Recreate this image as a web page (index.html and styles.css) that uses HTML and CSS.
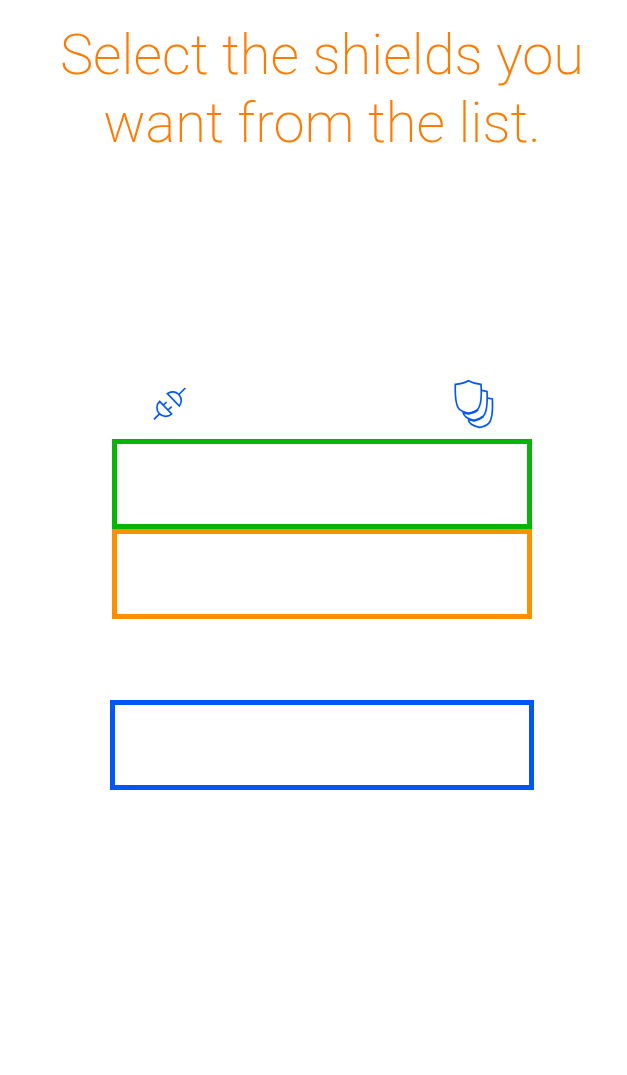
FILE: index.html
```html
<!DOCTYPE html>
<html lang="en">
<head>
<meta charset="utf-8">
<meta name="viewport" content="width=device-width, initial-scale=1">
<title>Shields</title>
<link rel="stylesheet" href="styles.css">
</head>
<body>
<main class="page">
  <h1 class="title">Select the shields you want from the list.</h1>
  <section class="picker">
    <div class="icons">
      <svg class="icon icon-plug" viewBox="0 0 150 138" aria-hidden="true">
        <path d="M121 24 103 42M67 41A26 26 0 0 1 103 78ZM44 64 80 102A26 26 0 0 1 44 64ZM44 101 27 118M54 76 65 66M69 90 80 80"/>
      </svg>
      <svg class="icon icon-shields" viewBox="0 0 156 186" aria-hidden="true">
        <path d="M61 26Q46 35 22 37Q20 100 35 113Q44 120 61 124Q80 120 89 112Q103 96 99 37Q78 35 61 26Z"/>
        <path d="M101 55 117 58Q120 118 106 132Q96 141 78 145Q48 138 45 121"/>
        <path d="M118 78 133 81Q136 140 122 154Q113 163 95 166Q62 159 61 142"/>
        <path class="shade" d="M45 120Q52 125 61 125Q80 122 90 113M61 141Q69 146 78 146Q96 143 107 133"/>
      </svg>
    </div>
    <ul class="list">
      <li class="item item-green"></li>
      <li class="item item-orange"></li>
    </ul>
    <button class="confirm" type="button" aria-label="Confirm"></button>
  </section>
</main>
</body>
</html>
```
FILE: styles.css
```css
* {
  box-sizing: border-box;
}

body {
  margin: 0;
  background: #fff;
  font-family: Roboto, "Liberation Sans", sans-serif;
}

.page {
  display: flex;
  flex-direction: column;
  align-items: center;
  padding: 21px 0 20px 17px;
}

.title {
  max-width: 560px;
  margin: 0;
  color: #ff7a00;
  font-size: 56px;
  font-weight: 200;
  line-height: 68px;
  text-align: center;
}

.picker {
  display: flex;
  flex-direction: column;
  width: 70%;
  max-width: 424px;
  margin-top: 215px;
}

.icons {
  display: flex;
  justify-content: space-between;
  align-items: center;
  padding: 0 34px 0 35px;
}

.icon {
  fill: none;
  stroke: #0057f5;
  stroke-width: 5;
}

.icon-plug {
  width: 50px;
  height: 46px;
}

.icon-shields {
  width: 52px;
  height: 62px;
}

.icon .shade {
  stroke-width: 6;
}

.list {
  margin: 5px 2px 0;
  padding: 0;
  list-style: none;
}

.item {
  height: 90px;
  border: 5px solid;
}

.item-green {
  border-color: #07b407;
}

.item-orange {
  border-color: #f99100;
}

.confirm {
  height: 90px;
  margin-top: 81px;
  padding: 0;
  border: 5px solid #0057f5;
  border-radius: 0;
  background: transparent;
}
```
